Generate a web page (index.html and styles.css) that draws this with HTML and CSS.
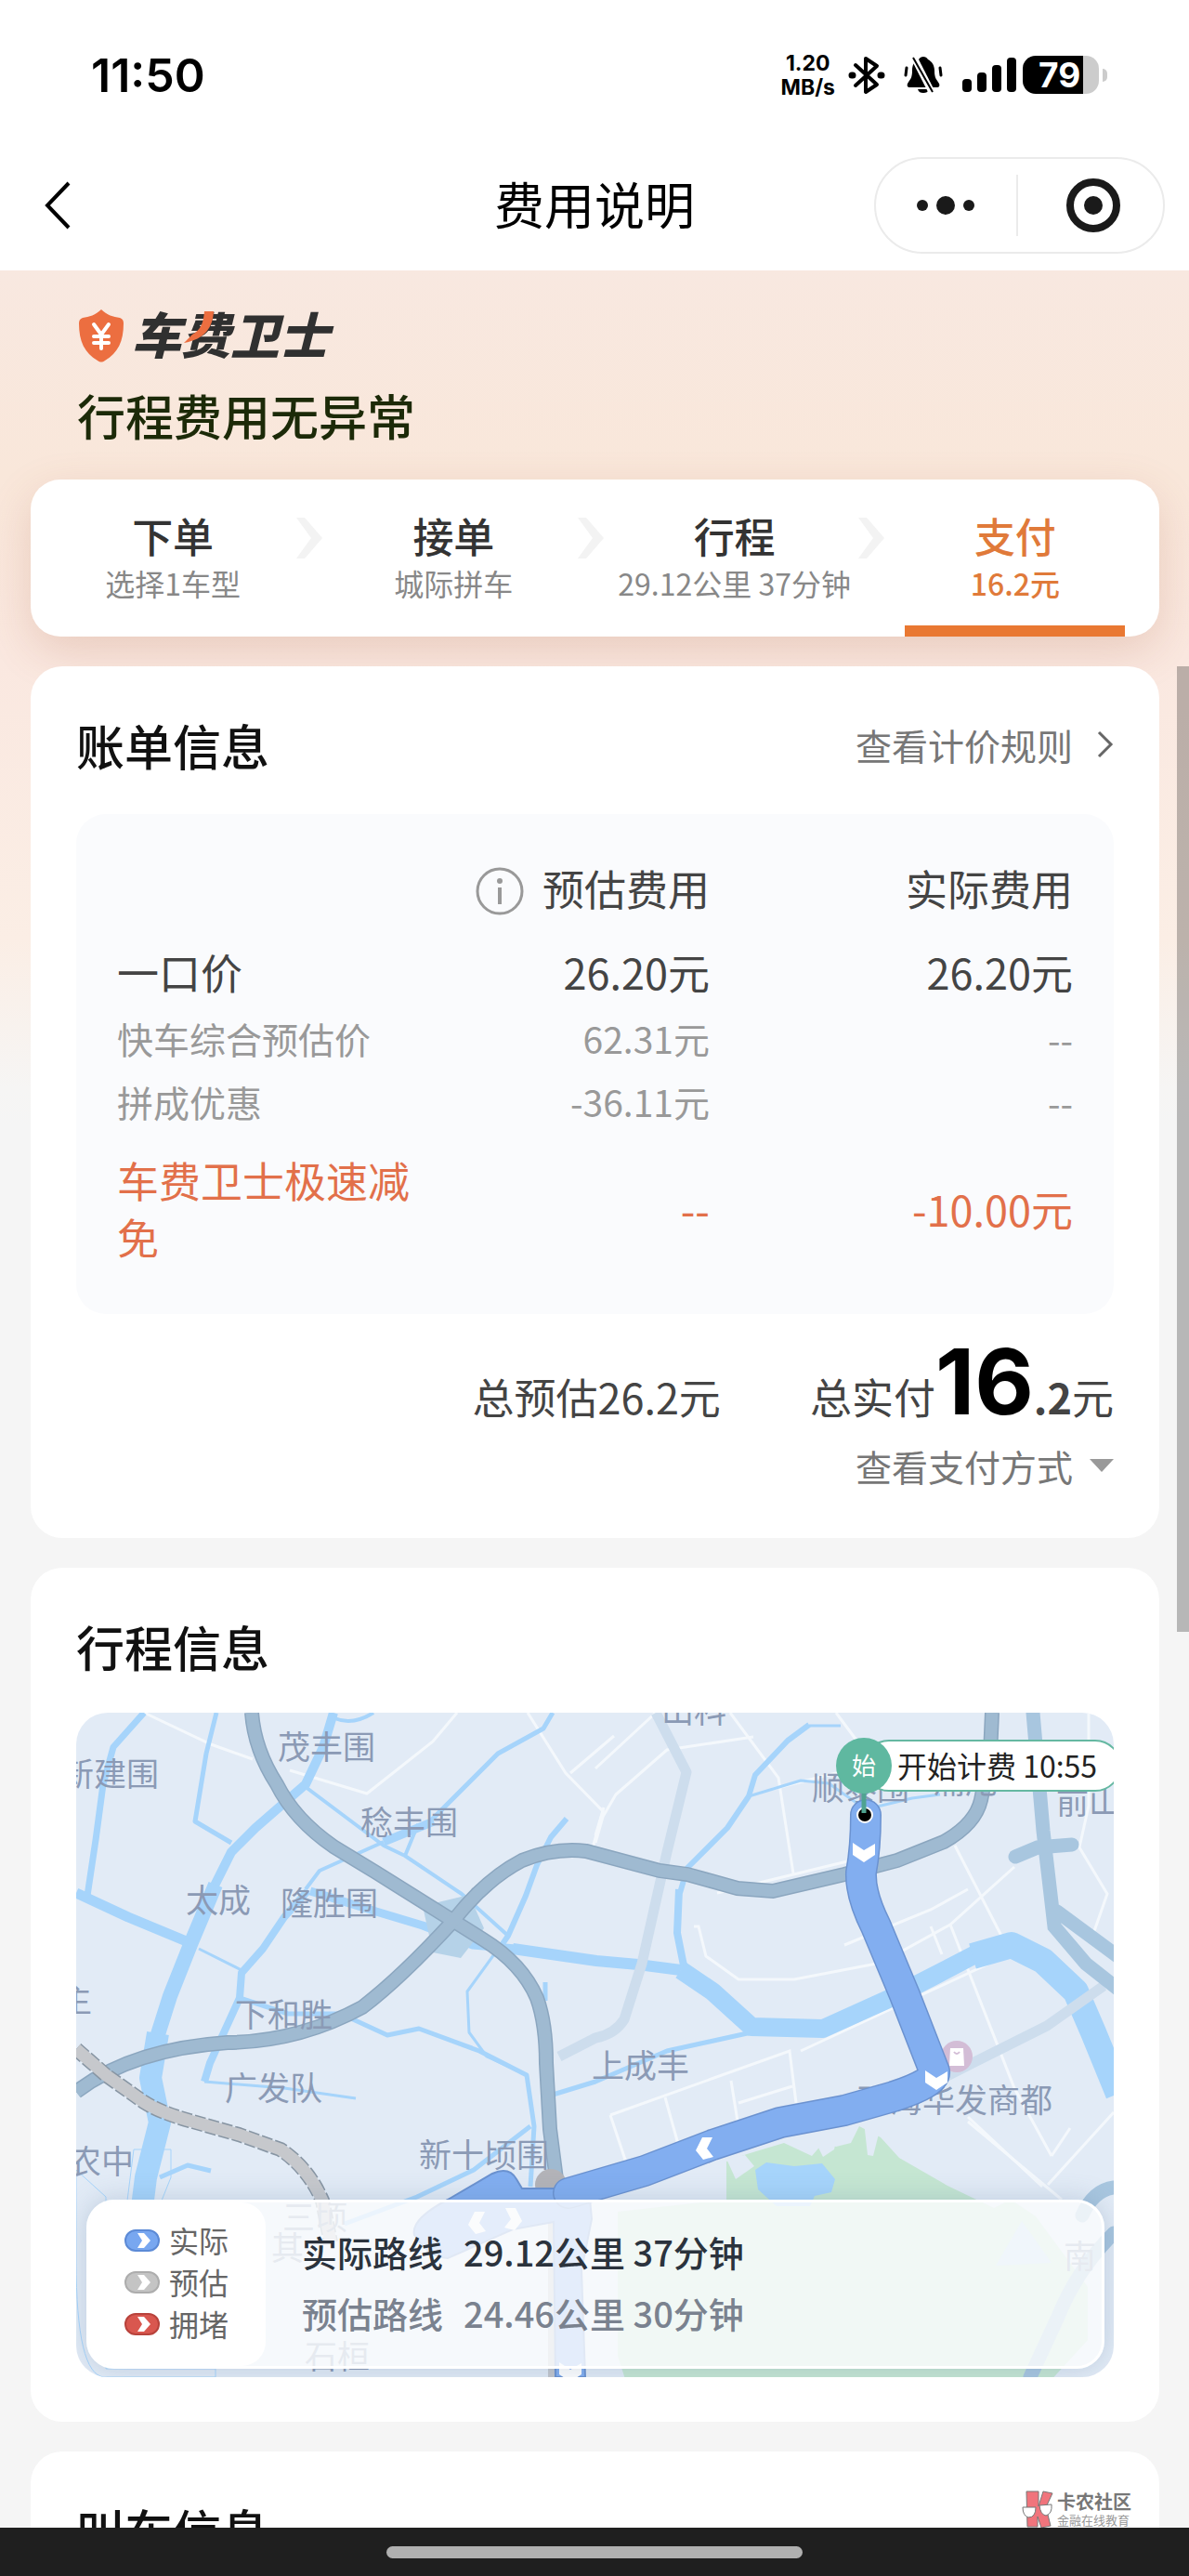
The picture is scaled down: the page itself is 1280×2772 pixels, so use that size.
FILE: index.html
```html
<!DOCTYPE html>
<html lang="zh-CN">
<head>
  <meta charset="UTF-8" />
  <meta name="viewport" content="width=device-width, initial-scale=1.0"/>
  <title>费用说明</title>
  <link rel="stylesheet" href="styles.css">
</head>
<body>
  <!-- Status bar -->
  <div class="status-bar">
    <span class="clock">11:50</span>
    <div class="status-icons">
      <div class="net-speed"><span>1.20</span><span>MB/s</span></div>
      <svg class="icon-bt" width="40" height="42" viewBox="0 0 40 42" fill="none" stroke="#000" stroke-width="4" stroke-linejoin="round" stroke-linecap="round">
        <path d="M8 10L31 31 19 39V3L31 11 8 32"/>
        <path d="M4 21h1M35 21h1" stroke-width="7"/>
      </svg>
      <svg class="icon-bell" width="42" height="42" viewBox="0 0 42 42">
        <path d="M21 1c-2 0-4 1-5 3-5 2-7 6-7 12 0 8-2 9-5 14-1 2 0 4 2 4h30c2 0 3-2 2-4-3-5-5-6-5-14 0-6-3-10-7-12-1-2-3-3-5-3z"/>
        <path d="M15 36h12c-1 3-3 4-6 4s-5-1-6-4z"/>
        <path d="M3 13l-1 8M39 13l1 8" stroke="#000" stroke-width="3" stroke-linecap="round"/>
        <path d="M10 0L31 41" stroke="#fff" stroke-width="7"/>
        <path d="M10 2L31 39" stroke="#000" stroke-width="2"/>
      </svg>
      <svg class="icon-signal" width="58" height="38" viewBox="0 0 58 38">
        <rect x="0" y="23" width="10" height="14" rx="4"/>
        <rect x="16" y="16" width="10" height="21" rx="4"/>
        <rect x="32" y="8" width="10" height="29" rx="4"/>
        <rect x="48" y="0" width="10" height="37" rx="4"/>
      </svg>
      <div class="battery"><span class="battery-level">79</span></div>
    </div>
  </div>

  <!-- Navigation -->
  <header class="navbar">
    <button class="back" type="button" aria-label="返回">
      <svg width="28" height="52" viewBox="0 0 28 52" fill="none" stroke="#000" stroke-width="4"><path d="M26 2L3 26l23 24"/></svg>
    </button>
    <h1>费用说明</h1>
    <div class="capsule">
      <button type="button" aria-label="更多">
        <svg width="64" height="24" viewBox="0 0 64 24" fill="#1a1a1a"><circle cx="7" cy="12" r="6"/><circle cx="32" cy="12" r="10"/><circle cx="57" cy="12" r="6"/></svg>
      </button>
      <button type="button" aria-label="关闭">
        <svg width="60" height="60" viewBox="0 0 60 60"><circle cx="30" cy="30" r="25" fill="none" stroke="#1a1a1a" stroke-width="8"/><circle cx="30" cy="30" r="10" fill="#1a1a1a"/></svg>
      </button>
    </div>
  </header>

  <main class="content">
    <section class="hero">
      <svg class="brand" width="280" height="60" viewBox="0 0 280 60" role="img" aria-label="车费卫士">
        <path d="M26 2c6 6 13 8 20 9 3 1 4 3 4 6 0 19-6 32-20 40-3 2-5 2-8 0C8 49 2 36 2 17c0-3 1-5 4-6 7-1 14-3 20-9z" fill="#ec6e40"/>
        <path d="M18 18l8 11 8-11M26 29v15M18 31h16M18 38h16" fill="none" stroke="#fff" stroke-width="4" stroke-linecap="round"/>
        <text class="brand-text" x="59" y="50">车费卫士</text>
        <path d="M137 4h10c-1 17-9 30-32 34l9-9c9-5 12-12 13-25z" fill="#ec6e40"/>
      </svg>
      <h2 class="hero-title">行程费用无异常</h2>
    </section>

    <ol class="steps">
      <li class="step"><b>下单</b><span>选择1车型</span></li>
      <li class="arrow"><svg width="28" height="44" viewBox="0 0 28 44" fill="#f3f3f3"><path d="M0 0h9l19 22L9 44H0l16-22z"/></svg></li>
      <li class="step"><b>接单</b><span>城际拼车</span></li>
      <li class="arrow"><svg width="28" height="44" viewBox="0 0 28 44" fill="#f3f3f3"><path d="M0 0h9l19 22L9 44H0l16-22z"/></svg></li>
      <li class="step"><b>行程</b><span>29.12公里 37分钟</span></li>
      <li class="arrow"><svg width="28" height="44" viewBox="0 0 28 44" fill="#f3f3f3"><path d="M0 0h9l19 22L9 44H0l16-22z"/></svg></li>
      <li class="step active"><b>支付</b><span>16.2元</span></li>
    </ol>

    <!-- Bill -->
    <section class="card">
      <div class="card-head">
        <h2>账单信息</h2>
        <a class="more" href="#">查看计价规则
          <svg width="18" height="30" viewBox="0 0 18 30" fill="none" stroke="#666" stroke-width="3"><path d="M2 2l13 13L2 28"/></svg>
        </a>
      </div>
      <div class="bill-panel">
        <table class="bill">
          <thead>
            <tr>
              <th class="col-name"></th>
              <th>
                <svg class="info" width="52" height="52" viewBox="0 0 52 52"><circle cx="26" cy="26" r="24" fill="none" stroke="#999" stroke-width="3"/><path d="M26 22v18" stroke="#999" stroke-width="4"/><circle cx="26" cy="15" r="3" fill="#999"/></svg>预估费用
              </th>
              <th class="col-real">实际费用</th>
            </tr>
          </thead>
          <tbody>
            <tr class="main"><td>一口价</td><td>26.20元</td><td>26.20元</td></tr>
            <tr class="sub"><td>快车综合预估价</td><td>62.31元</td><td>--</td></tr>
            <tr class="sub"><td>拼成优惠</td><td>-36.11元</td><td>--</td></tr>
            <tr class="discount"><td>车费卫士极速减免</td><td>--</td><td>-10.00元</td></tr>
          </tbody>
        </table>
      </div>
      <div class="totals">
        <span>总预估26.2元</span>
        <span class="paid">总实付<strong>16</strong><b>.2</b>元</span>
      </div>
      <div class="pay-row">
        <button class="more" type="button">查看支付方式
          <svg width="26" height="14" viewBox="0 0 26 14" fill="#999"><path d="M0 0h26L13 14z"/></svg>
        </button>
      </div>
    </section>

    <!-- Trip -->
    <section class="card">
      <div class="card-head"><h2>行程信息</h2></div>
      <div class="map">
        <svg class="map-canvas" viewBox="0 0 1117 715" preserveAspectRatio="xMidYMid slice">
          <rect width="1117" height="715" fill="#e2ebf6"/>
          <!-- parks -->
          <path d="M583 537L700 524V483l22-8 40-12 30 14 12-14 14 4 16-4 9-18 23 12 20 22 52 30 50 24 18-9 27 18 56 76v57l-53 58H596l-13-41z" fill="#c5e6d2"/>
          <path d="M700 480l20-4 10 12-20 14z" fill="#e2ebf6"/>
          <path d="M790 450l14 28 12-8 4-18z" fill="#e2ebf6"/>
          <path d="M848 440l4 36 6 1 8-32z" fill="#e2ebf6"/>
          <path d="M731 492l12-8 30 4 30-3 14 17-4 14-18 4-5 11H754l-20-18z" fill="#a6d4fb"/>
          <path d="M990 595l28-48 32 45z" fill="#c3def2"/>
          <!-- minor roads -->
          <g class="road-minor">
            <path d="M73 0L145 34 190 50M230 62L313 87 384 31 410 0M486 0L527 65 567 106 555 149M532 65L579 25"/>
            <path d="M559 60L624 0M559 140l8-28 14-24 55-48L729 26M704 0L756 70 772 173M690 194L830 160M559 132l9-30"/>
            <path d="M818 0L850 43M750 82L830 62M827 250L920 212 960 190M870 267L941 228 1010 166M941 228L1010 404 1050 477M946 143L996 240M665 230l5 0 8 32 35 25 60 0 120-23"/>
            <path d="M920 230l12 30M1090 0v100l-10 45 30 50-14 40M575 433L768 364 775 420M575 433l20 60M634 414l14 50M705 396l8 50M713 420l58-18M780 364L1000 262M960 435L1040 510M1050 477l20-30"/>
            <path d="M1061 524L960 440M1117 430L1046 508"/>
          </g>
          <!-- water -->
          <g class="water">
            <path stroke-width="10" d="M277 0L266 37 247 77 224 97 193 124 167 150 147 190"/>
            <path stroke-width="16" d="M150 185L124 247 101 305 82 365"/>
            <path stroke-width="24" d="M88 345L80 393 90 441 75 500 70 540"/>
            <path stroke-width="7" d="M73 0L40 37 29 77 21 137 12 197"/>
            <path stroke-width="11" d="M0 194L56 220 121 247"/>
            <path stroke-width="5" d="M151 0L140 44 128 117 167 140"/>
            <path stroke-width="4" d="M278 6q20 8 42-6M247 80L331 143 354 154 415 195 465 240M331 139L262 170 247 190M368 120l-14 34"/>
            <path stroke-width="5" d="M513 0L503 17 454 44 411 87 381 117"/>
            <path stroke-width="9" d="M385 117L331 139"/>
            <path stroke-width="9" d="M252 192L323 214 373 229 427 250 473 254"/>
            <path stroke-width="12" d="M470 254L560 267 605 271 651 277"/>
            <path stroke-width="6" d="M528 114L511 134 496 164 484 197 465 240 450 262M789 13L766 30 731 67 724 90 701 124 658 167 650 194"/>
            <path stroke-width="8" d="M249 192L224 220 201 254 178 280 176 307 144 377 138 397M649 190L647 237 655 277"/>
            <path stroke-width="3" d="M132 254L178 277M138 397L224 404 301 415M450 260L421 300 423 344 442 370 485 390M823 14H789M724 90L780 73 810 76 850 104 900 92 930 88"/>
            <path stroke-width="5" d="M505 290v20M176 307L228 324 285 324 335 347 369 340 434 364 485 390 493 445 489 510M489 445L428 492 367 521 289 550M727 344L636 364 559 397 510 412M90 500l30-13 25 6"/>
            <path stroke-width="20" d="M651 277L685 300 727 338 804 340 877 307 922 284 968 260"/>
            <path stroke-width="28" d="M965 262L1007 250 1041 267 1076 300 1095 344 1122 410"/>
            <path fill="#a6d4fb" stroke="none" d="M0 492L32 521V706H150V715H30Q0 712 0 590zM62 470h40v30l-10 25H55z"/>
          </g>
          <!-- secondary roads -->
          <g class="road-light">
            <path d="M624 0L657 64 636 150 609 270 590 330Q580 346 559 350L520 370"/>
            <path d="M1106 294L1045 337 965 377 920 400"/>
          </g>
          <g class="road-blue">
            <path d="M1030 0L1041 127 1053 230 1087 270 1121 297M1011 155L1035 145 1072 142M1056 214L1121 262"/>
            <path d="M1117 511q-22 3-34 30M1117 560q-40 40-60 90l-30 65"/>
          </g>
          <!-- highways -->
          <path d="M373 208l50-12 16 36-25 32-30-6z" fill="#b5d2e8"/>
          <g class="highway-edge">
            <path d="M189 0Q192 40 216 77 235 115 277 144L323 172 406 224 438 244Q480 270 496 307 506 335 506 377L510 448 518 510"/>
            <path d="M0 408Q60 362 163 355 240 354 308 317 350 285 406 224 440 180 480 159 515 145 549 149L628 170 658 174 712 189 750 192 827 174 884 159 934 139Q968 120 974 94L984 44 986 0"/>
          </g>
          <g class="highway">
            <path d="M189 0Q192 40 216 77 235 115 277 144L323 172 406 224 438 244Q480 270 496 307 506 335 506 377L510 448 518 510"/>
            <path d="M0 408Q60 362 163 355 240 354 308 317 350 285 406 224 440 180 480 159 515 145 549 149L628 170 658 174 712 189 750 192 827 174 884 159 934 139Q968 120 974 94L984 44 986 0"/>
          </g>
          <path class="rail-edge" d="M0 362L32 390 73 419Q90 430 122 439L175 454 220 470Q250 490 265 525L274 570"/>
          <path class="rail" d="M0 362L32 390 73 419Q90 430 122 439L175 454 220 470Q250 490 265 525L274 570"/>
          <path d="M512 530V715" stroke="#c3c6cc" stroke-width="8"/>
          <!-- place names -->
          <g class="place">
            <text x="217" y="50">茂丰围</text>
            <text x="-16" y="79">新建围</text>
            <text x="306" y="131">稔丰围</text>
            <text x="118" y="215">太成</text>
            <text x="220" y="218">隆胜围</text>
            <text x="-18" y="322">主</text>
            <text x="171" y="338">下和胜</text>
            <text x="160" y="417">广发队</text>
            <text x="-8" y="496">农中</text>
            <text x="369" y="489">新十顷围</text>
            <text x="555" y="393">上成丰</text>
            <text x="630" y="11">山科</text>
            <text x="792" y="94">顺泰围</text>
            <text x="922" y="87">涌尾</text>
            <text x="1055" y="109">前山</text>
            <text x="841" y="430">珠海华发商都</text>
            <text x="222" y="556">三顷</text>
            <text x="210" y="589">其</text>
            <text x="246" y="706">石桓</text>
            <text x="1063" y="598">南</text>
          </g>
          <circle cx="948" cy="370" r="17" fill="#d3bdd6"/>
          <path d="M941 361h14l1 19h-16z" fill="#fff"/><path d="M945 365q3 4 6 0" fill="none" stroke="#d3bdd6" stroke-width="2"/>
          <circle cx="511" cy="508" r="17" fill="#b3b3b8"/>
          <!-- route -->
          <path class="route-block" d="M400 524L448 496Q466 488 474 502L480 512H552L555 545 544 600 548 715H516L514 548 470 556 400 587Q380 586 364 562 360 545 400 524z"/>
          <path class="route-edge" d="M850 110Q850 145 845 172 844 196 861 230L892 304 924 386Q926 398 880 413L827 428 758 441 685 465 612 493 530 517"/>
          <path class="route" d="M850 110Q850 145 845 172 844 196 861 230L892 304 924 386Q926 398 880 413L827 428 758 441 685 465 612 493 530 517"/>
          <g fill="#fff">
            <path d="M836 140l12 8 12-7v12l-12 8-12-8z"/>
            <path d="M914 385l12 8 12-7v12l-12 8-12-8z"/>
            <path d="M685 457h-11l-7 14 8 10 11-3-7-9z"/>
            <path d="M440 537h-11l-7 14 8 10 11-3-7-9zM462 533h11l7 14-8 10-11-3 7-9z"/>
            <path d="M520 699l12 8 12-7v12l-12 8-12-8z"/>
          </g>
          <!-- start marker -->
          <rect x="848" y="30" width="276" height="54" rx="27" fill="#fff" stroke="#65b8a2" stroke-width="2"/>
          <circle cx="849" cy="110" r="9" fill="#fff"/><circle cx="849" cy="110" r="7" fill="#000"/>
          <path d="M848 84v24" stroke="#4fa391" stroke-width="5"/>
          <circle cx="848" cy="57" r="30" fill="#5fb8a0"/>
          <text class="pin-text" x="848" y="67">始</text>
          <text class="pin-label" x="884" y="70">开始计费 10:55</text>
        </svg>
        <div class="route-bar">
          <ul class="legend">
            <li><svg width="38" height="24" viewBox="0 0 38 24"><rect x="1" y="1" width="36" height="22" rx="11" fill="#78a7f0" stroke="#5c8ad6" stroke-width="2"/><path d="M14 4h7l7 8-7 8h-7l5-8z" fill="#fff"/></svg>实际</li>
            <li><svg width="38" height="24" viewBox="0 0 38 24"><rect x="1" y="1" width="36" height="22" rx="11" fill="#c4c4c4" stroke="#adadad" stroke-width="2"/><path d="M14 4h7l7 8-7 8h-7l5-8z" fill="#fff"/></svg>预估</li>
            <li><svg width="38" height="24" viewBox="0 0 38 24"><rect x="1" y="1" width="36" height="22" rx="11" fill="#d9574f" stroke="#b8433c" stroke-width="2"/><path d="M14 4h7l7 8-7 8h-7l5-8z" fill="#fff"/></svg>拥堵</li>
          </ul>
          <div class="route-info">
            <p class="actual"><span>实际路线</span><span>29.12公里 37分钟</span></p>
            <p><span>预估路线</span><span>24.46公里 30分钟</span></p>
          </div>
        </div>
      </div>
    </section>

    <section class="card">
      <div class="card-head"><h2>叫车信息</h2></div>
    </section>

    <div class="scrollbar"></div>
    <div class="watermark">
      <svg width="34" height="40" viewBox="0 0 34 40" stroke="#777" stroke-width="1">
        <path d="M5 1h13v16l5-16 10 2-7 15 5 20-10 2-4-12v11H6z" fill="#f0747c"/>
        <path d="M1 18h14q0 11-8 11-6-2-6-11zM19 16l13-1q1 10-6 12-6-1-7-11z" fill="#fff"/>
      </svg>
      <div><b>卡农社区</b><span>金融在线教育</span></div>
    </div>
  </main>

  <div class="home-bar"><span></span></div>
</body>
</html>
```
FILE: styles.css
```css
/* General reset */
* {
  margin: 0;
  padding: 0;
  box-sizing: border-box;
}

body {
  font-family: "Noto Sans CJK SC", "Noto Sans", sans-serif;
  font-size: 45px;
  color: #444;
  background: #f5f5f5;
  height: 100vh;
  display: flex;
  flex-direction: column;
  overflow: hidden;
}
button {
  border: none;
  background: none;
  font: inherit;
  color: inherit;
  cursor: pointer;
}
svg {
  display: block;
  flex: none;
}
ol, ul {
  list-style: none;
}

/* Status bar */
.status-bar {
  flex: none;
  height: 161px;
  padding: 0 88px 0 98px;
  display: flex;
  align-items: center;
  justify-content: space-between;
  background: #fff;
  color: #000;
  font-family: Inter, sans-serif;
}
.clock {
  font-size: 50px;
  font-weight: 600;
}
.status-icons {
  display: flex;
  align-items: center;
}
.net-speed {
  display: flex;
  flex-direction: column;
  align-items: center;
  font-size: 23px;
  line-height: 26px;
  font-weight: 700;
}
.icon-bt {
  margin-left: 14px;
}
.icon-bell {
  margin-left: 20px;
}
.icon-signal {
  margin-left: 21px;
}
.battery {
  position: relative;
  width: 82px;
  height: 41px;
  margin-left: 7px;
  margin-right: 9px;
  border-radius: 14px;
  background: linear-gradient(to right, #000 65px, #ccc 65px);
}
.battery::after {
  content: '';
  position: absolute;
  right: -9px;
  top: 14px;
  width: 5px;
  height: 14px;
  border-radius: 0 5px 5px 0;
  background: #ccc;
}
.battery-level {
  display: block;
  padding-left: 17px;
  color: #fff;
  font-size: 37px;
  line-height: 41px;
  font-weight: 700;
}

/* Navigation */
.navbar {
  flex: none;
  height: 130px;
  padding: 0 26px 10px 48px;
  display: grid;
  grid-template-columns: 1fr auto 1fr;
  align-items: start;
  background: #fff;
}
.navbar h1 {
  font-size: 54px;
  line-height: 116px;
  font-weight: 400;
  color: #000;
  margin-right: 22px;
}
.back {
  margin-top: 34px;
  justify-self: start;
}
.capsule {
  justify-self: end;
  margin-top: 8px;
  display: flex;
  align-items: center;
  width: 313px;
  height: 104px;
  border: 2px solid #ebebeb;
  border-radius: 52px;
}
.capsule button {
  flex: 1;
  height: 66px;
  display: flex;
  align-items: center;
  justify-content: center;
}
.capsule button + button {
  border-left: 2px solid #ebebeb;
  padding-left: 6px;
}

/* Scrolling content */
.content {
  position: relative;
  flex: 1;
  min-height: 0;
  overflow: hidden;
  padding: 0 32px 0 33px;
  background: linear-gradient(#f8e8e0, #f9e7da 220px, #fae8e0 420px, #fbeee5 720px, #f6f5f4 880px, #f5f5f5 920px);
}
.hero {
  padding: 40px 50px 37px;
}
.brand-text {
  font-size: 53px;
  font-weight: 900;
  font-style: italic;
  fill: #303030;
}
.hero-title {
  margin-top: 24px;
  font-size: 52px;
  line-height: 64px;
  font-weight: 500;
  color: #1c2a08;
}

/* Order steps */
.steps {
  display: flex;
  height: 169px;
  padding: 0 18px 0 16px;
  background: #fff;
  border-radius: 32px;
  box-shadow: 0 16px 48px rgba(170, 90, 60, 0.2);
}
.step {
  flex: 1 1 0;
  display: flex;
  flex-direction: column;
  align-items: center;
  padding-top: 34px;
  white-space: nowrap;
}
.step b {
  font-size: 44px;
  line-height: 52px;
  font-weight: 500;
  color: #333;
}
.step span {
  font-size: 32px;
  line-height: 50px;
  color: #888;
}
.step.active b,
.step.active span {
  color: #e07a3a;
}
.step.active span {
  font-weight: 500;
}
.step.active::after {
  content: '';
  width: 237px;
  height: 12px;
  margin-top: auto;
  background: #e97832;
}
.arrow {
  padding-top: 41px;
}
.arrow svg {
  margin: 0 4px 0 -4px;
}

/* Cards */
.card {
  margin-top: 32px;
  padding: 46px 49px 48px;
  background: #fff;
  border-radius: 34px;
}
.steps + .card {
  position: relative;
}
.card-head {
  display: flex;
  align-items: center;
  justify-content: space-between;
  height: 76px;
}
.card-head h2 {
  font-size: 52px;
  font-weight: 500;
  color: #111;
}
.more {
  display: flex;
  align-items: center;
  gap: 26px;
  font-size: 39px;
  color: #777;
  text-decoration: none;
}

/* Bill table */
.bill-panel {
  margin-top: 37px;
  padding: 27px 44px 33px;
  background: #fafbfd;
  border-radius: 32px;
}
.bill {
  width: 100%;
  border-collapse: collapse;
  table-layout: fixed;
}
.bill th {
  height: 104px;
  font-weight: 400;
  text-align: right;
}
.bill .col-name {
  width: 32%;
}
.bill .col-real {
  width: 38%;
}
.info {
  display: inline-block;
  vertical-align: -10px;
  margin-right: 20px;
}
.bill td {
  text-align: right;
}
.bill td:first-child {
  text-align: left;
}
.main td {
  height: 76px;
}
.sub td {
  height: 68px;
  line-height: 60px;
  font-size: 39px;
  color: #999;
}
.discount td {
  height: 162px;
  line-height: 61px;
  color: #e2704a;
}
.totals {
  display: flex;
  justify-content: flex-end;
  align-items: baseline;
  gap: 96px;
  height: 132px;
  line-height: 146px;
}
.paid strong {
  font-family: Inter, sans-serif;
  font-size: 98px;
  font-weight: 700;
  color: #000;
}
.paid b {
  font-weight: 700;
}
.pay-row {
  display: flex;
  justify-content: flex-end;
  height: 61px;
}
.pay-row .more {
  gap: 18px;
}

/* Trip map */
.map {
  position: relative;
  height: 715px;
  margin-top: 34px;
  border-radius: 34px;
  overflow: hidden;
}
.map-canvas {
  width: 100%;
  height: 100%;
}
.road-minor path {
  fill: none;
  stroke: #f4f8fc;
  stroke-width: 3;
}
.water path {
  fill: none;
  stroke: #a6d4fb;
  stroke-linejoin: round;
}
.road-light path {
  fill: none;
  stroke: #cddded;
  stroke-width: 11;
  stroke-linejoin: round;
}
.road-blue path {
  fill: none;
  stroke: #a8c6df;
  stroke-width: 15;
  stroke-linecap: round;
}
.highway-edge path {
  fill: none;
  stroke: #8ba6bf;
  stroke-width: 16;
}
.highway path {
  fill: none;
  stroke: #9fbad1;
  stroke-width: 13;
}
.rail-edge {
  fill: none;
  stroke: #8795a3;
  stroke-width: 16;
  stroke-dasharray: 12 3;
}
.rail {
  fill: none;
  stroke: #c6c8cc;
  stroke-width: 13;
}
.place text {
  font-size: 35px;
  fill: #8b9ab5;
}
.route-block {
  fill: #82aef0;
  stroke: #6b92d0;
  stroke-width: 2;
}
.route-edge {
  fill: none;
  stroke: #6b92d0;
  stroke-width: 34;
  stroke-linecap: round;
  stroke-linejoin: round;
}
.route {
  fill: none;
  stroke: #82aef0;
  stroke-width: 31;
  stroke-linecap: round;
  stroke-linejoin: round;
}
.pin-text {
  font-size: 26px;
  fill: #fff;
  text-anchor: middle;
}
.pin-label {
  font-size: 32px;
  fill: #222;
}
.route-bar {
  position: absolute;
  left: 11px;
  right: 10px;
  bottom: 9px;
  height: 182px;
  display: flex;
  border: 3px solid #fff;
  border-radius: 30px;
  background: rgba(250, 251, 253, 0.82);
  box-shadow: 0 0 28px rgba(80, 110, 150, 0.25);
}
.legend {
  width: 190px;
  padding: 18px 0 0 38px;
  background: #fff;
  border-radius: 26px;
  font-size: 32px;
  line-height: 45px;
  color: #666;
}
.legend li {
  display: flex;
  align-items: center;
  gap: 10px;
}
.route-info {
  padding: 20px 0 0 39px;
  font-size: 38px;
  line-height: 66px;
  font-weight: 500;
  color: #7a828f;
  white-space: nowrap;
}
.route-info p {
  display: flex;
  gap: 22px;
}
.route-info .actual {
  color: #2b333d;
}

/* Overlays */
.scrollbar {
  position: absolute;
  top: 426px;
  right: 0;
  width: 13px;
  height: 1039px;
  background: rgba(0, 0, 0, 0.25);
}
.watermark {
  position: absolute;
  right: 62px;
  bottom: 0;
  display: flex;
  align-items: center;
  gap: 4px;
  color: #777;
}
.watermark div {
  display: flex;
  flex-direction: column;
}
.watermark b {
  font-size: 20px;
  line-height: 24px;
}
.watermark span {
  font-size: 13px;
  line-height: 16px;
  color: #999;
}

/* System home bar */
.home-bar {
  flex: none;
  display: flex;
  align-items: center;
  justify-content: center;
  height: 52px;
  background: #1f1f1f;
}
.home-bar span {
  width: 35%;
  height: 13px;
  border-radius: 7px;
  background: #b0b0b0;
}
```
